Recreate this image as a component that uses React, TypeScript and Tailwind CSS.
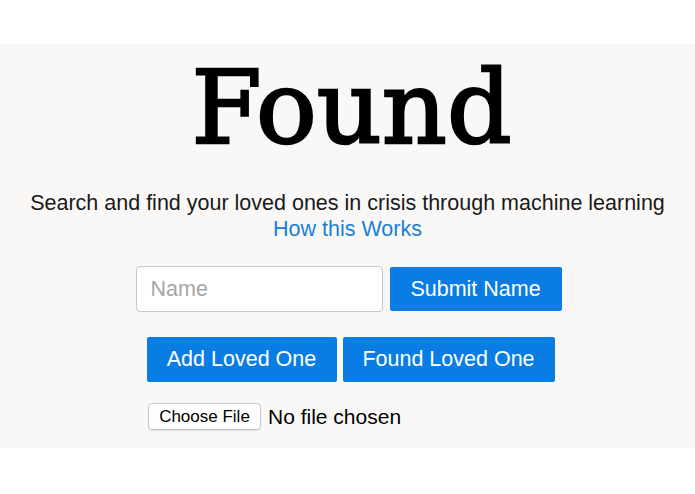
export default function App() {
  return (
    <div className="w-[695px] h-[494px] bg-white" style={{ fontFamily: '"Liberation Sans", Arial, sans-serif' }}>
      <div className="h-[44px]" />
      <div className="h-[404px] bg-[#f9f8f6] flex flex-col items-center">
        <h1
          className="text-[101px] leading-none text-black mt-[14px] ml-[8px] [-webkit-text-stroke-width:2.5px] [-webkit-text-stroke-color:#000]"
          style={{ fontFamily: '"DejaVu Serif", serif' }}
        >
          Found
        </h1>
        <p className="mt-[31px] text-[21.5px] leading-[26px] text-[#1a1a1a]">
          Search and find your loved ones in crisis through machine learning
        </p>
        <a className="text-[21.5px] leading-[26px] text-[#1a7fd6]">How this Works</a>
        <div className="mt-[24px] ml-[2px] flex items-center gap-[7px]">
          <div className="w-[247px] h-[46px] rounded-[4px] border border-[#c8c8c8] bg-white flex items-center pl-[14px]">
            <span className="text-[21.5px] text-[#a6a6a6]">Name</span>
          </div>
          <button className="w-[172px] h-[44px] bg-[#0a7de4] text-white text-[21.5px] rounded-[2px]">Submit Name</button>
        </div>
        <div className="mt-[25px] ml-[6px] flex items-center gap-[6px]">
          <button className="w-[190px] h-[45px] bg-[#0a7de4] text-white text-[21.5px] rounded-[2px]">Add Loved One</button>
          <button className="w-[212px] h-[45px] bg-[#0a7de4] text-white text-[21.5px] rounded-[2px]">Found Loved One</button>
        </div>
        <div className="mt-[19px] flex items-center self-start ml-[148px] gap-[7px]">
          <button className="w-[113px] h-[27px] bg-white border border-[#c8c8c8] rounded-[4px] text-[17px] text-black shadow-[0_1px_1px_rgba(0,0,0,0.1)]">Choose File</button>
          <span className="text-[21px] text-black">No file chosen</span>
        </div>
      </div>
    </div>
  );
}
